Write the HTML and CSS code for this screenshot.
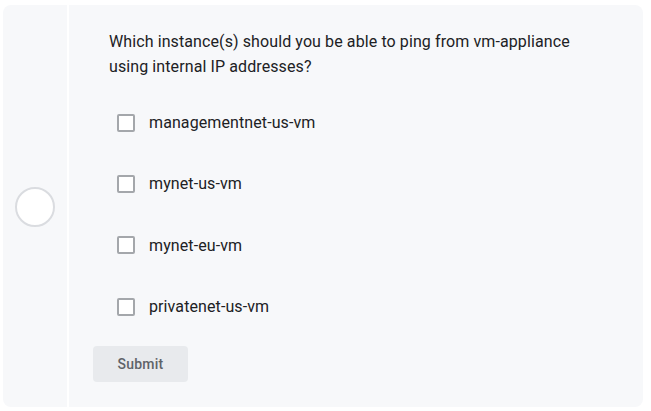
FILE: index.html
```html
<!DOCTYPE html>
<html>
<head>
<meta charset="utf-8">
<link rel="stylesheet" href="styles.css">
</head>
<body>
<div class="card">
  <div class="rail">
    <div class="status"></div>
  </div>
  <div class="sep"></div>
  <div class="content">
    <p class="question">Which instance(s) should you be able to ping from vm-appliance using internal IP addresses?</p>
    <div class="options">
      <label class="option"><span class="box"></span><span class="text">managementnet-us-vm</span></label>
      <label class="option"><span class="box"></span><span class="text">mynet-us-vm</span></label>
      <label class="option"><span class="box"></span><span class="text">mynet-eu-vm</span></label>
      <label class="option"><span class="box"></span><span class="text">privatenet-us-vm</span></label>
    </div>
    <button class="submit">Submit</button>
  </div>
</div>
</body>
</html>
```
FILE: styles.css
```css
* { box-sizing: border-box; }
html, body { margin: 0; padding: 0; background: #ffffff; }
body {
  font-family: Roboto, "Liberation Sans", Arial, sans-serif;
  color: #202124;
}
.card {
  margin: 5px 8px 0 3px;
  width: 640px;
  height: 402px;
  background: #f7f8fa;
  border-radius: 8px;
  display: flex;
  overflow: hidden;
}
.rail {
  width: 64px;
  display: flex;
  align-items: center;
  justify-content: center;
  padding-top: 2px;
}
.status {
  width: 40px;
  height: 40px;
  border-radius: 50%;
  background: #ffffff;
  border: 2px solid #dadce0;
}
.sep {
  width: 2px;
  background: #ffffff;
}
.content {
  flex: 1;
  padding: 24px 0 0 24px;
  display: flex;
  flex-direction: column;
  align-items: flex-start;
}
.question {
  margin: 0 0 0 16px;
  font-size: 16px;
  line-height: 25px;
  letter-spacing: 0.1px;
  width: 480px;
  color: #202124;
}
.options {
  margin-top: 13px;
  display: flex;
  flex-direction: column;
}
.option {
  height: 61.3px;
  display: flex;
  align-items: center;
  padding-left: 24px;
}
.box {
  width: 18px;
  height: 18px;
  border: 2px solid #a4a7ab;
  border-radius: 2px;
  background: #ffffff;
  margin-right: 14px;
}
.text {
  font-size: 16px;
  letter-spacing: 0.1px;
  color: #202124;
}
.submit {
  margin-top: 9px;
  width: 95px;
  height: 36px;
  border: none;
  border-radius: 4px;
  background: #e8eaed;
  font-family: Roboto, "Liberation Sans", Arial, sans-serif;
  font-size: 14px;
  font-weight: 500;
  letter-spacing: 0.2px;
  color: #5f6368;
  padding: 0;
}
```
